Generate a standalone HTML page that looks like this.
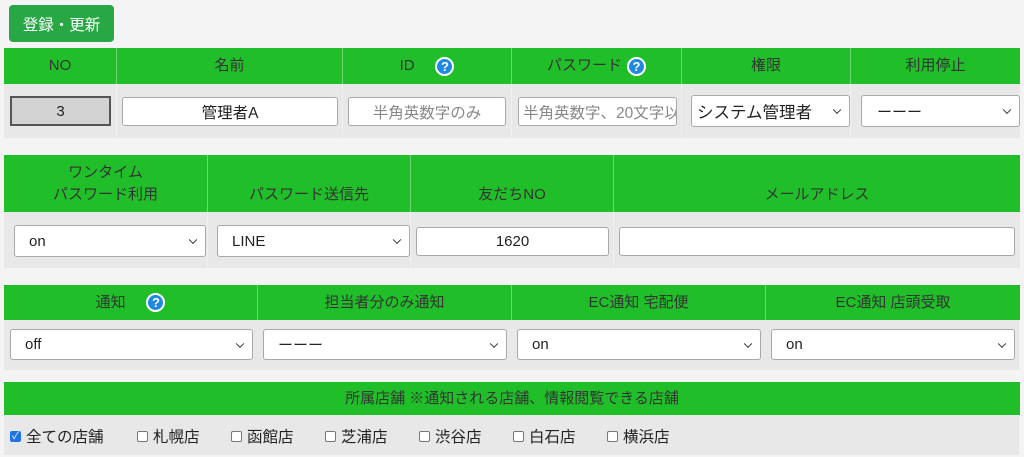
<!DOCTYPE html>
<html><head><meta charset="utf-8"><style>
*{box-sizing:border-box;margin:0;padding:0}
body{width:1024px;height:457px;background:#f4f4f4;position:relative;overflow:hidden;font-family:"Liberation Sans","Noto Sans CJK JP",sans-serif;font-size:15px;color:#222}
.a{position:absolute}
.h{position:absolute;background:#20bf2a;color:#333;display:flex;align-items:center;justify-content:center;text-align:center;line-height:22px;border-right:1px solid #6fd876}
.b{position:absolute;background:#e8e8e8;border-right:1px solid #f0f0f0}
.in{position:absolute;background:#fff;border:1px solid #a9a9a9;border-radius:3px;display:flex;align-items:center;justify-content:center;font-size:15px}
.sel{position:absolute;background:#fff;border:1px solid #a9a9a9;border-radius:3px;display:flex;align-items:center;padding-left:14px;font-size:15px}
.sel:after{content:"";position:absolute;right:9px;top:50%;width:5px;height:5px;border-right:1.6px solid #333;border-bottom:1.6px solid #333;transform:translateY(-70%) rotate(45deg)}
.q{display:inline-block;width:19px;height:19px;border-radius:50%;background:#1e88e5;border:2px solid #fff;color:#fff;font-weight:bold;font-size:13px;line-height:15px;text-align:center;vertical-align:middle}
.it{position:absolute;top:426px;font-size:15.5px;white-space:nowrap;display:flex;align-items:center;height:20px}
.cb{display:inline-block;width:11px;height:11px;border:1px solid #777;border-radius:2px;background:#fff;margin-right:5px;flex:none}
</style></head><body>
<div class="a" style="left:9px;top:5px;width:105px;height:37px;background:#28a745;border-radius:4px;color:#fff;display:flex;align-items:center;justify-content:center;font-size:15.5px">登録・更新</div>

<div class="h" style="left:4px;top:48px;width:113px;height:36px">NO</div>
<div class="h" style="left:117px;top:48px;width:226px;height:36px">名前</div>
<div class="h" style="left:343px;top:48px;width:169px;height:36px">ID&nbsp;&nbsp;&nbsp;&nbsp;&nbsp;<span class="q">?</span></div>
<div class="h" style="left:512px;top:48px;width:170px;height:36px">パスワード <span class="q" style="margin-left:5px">?</span></div>
<div class="h" style="left:682px;top:48px;width:169px;height:36px">権限</div>
<div class="h" style="left:851px;top:48px;width:169px;height:36px;border-right:none">利用停止</div>
<div class="b" style="left:4px;top:84px;width:113px;height:54px"></div>
<div class="b" style="left:117px;top:84px;width:226px;height:54px"></div>
<div class="b" style="left:343px;top:84px;width:169px;height:54px"></div>
<div class="b" style="left:512px;top:84px;width:170px;height:54px"></div>
<div class="b" style="left:682px;top:84px;width:169px;height:54px"></div>
<div class="b" style="left:851px;top:84px;width:169px;height:54px;border-right:none"></div>
<div class="in" style="left:10px;top:96px;width:101px;height:30px;background:#d3d3d3;border:2px solid #555;border-radius:0">3</div>
<div class="in" style="left:122px;top:97px;width:216px;height:29px;font-size:15.5px">管理者A</div>
<div class="in" style="left:348px;top:97px;width:158px;height:29px;color:#888;font-size:15.5px">半角英数字のみ</div>
<div class="in" style="left:518px;top:97px;width:159px;height:29px;color:#888;justify-content:flex-start;padding-left:4px;overflow:hidden;white-space:nowrap;font-size:15.5px">半角英数字、20文字以</div>
<div class="sel" style="left:691px;top:95px;width:159px;height:32px;padding-left:5px;font-size:16.5px">システム管理者</div>
<div class="sel" style="left:861px;top:95px;width:159px;height:32px;padding-left:15px">ーーー</div>

<div class="h" style="left:4px;top:155px;width:204px;height:57px">ワンタイム<br>パスワード利用</div>
<div class="h" style="left:208px;top:155px;width:203px;height:57px;padding-top:22px">パスワード送信先</div>
<div class="h" style="left:411px;top:155px;width:203px;height:57px;padding-top:22px">友だちNO</div>
<div class="h" style="left:614px;top:155px;width:406px;height:57px;padding-top:22px;border-right:none">メールアドレス</div>
<div class="b" style="left:4px;top:212px;width:204px;height:56px"></div>
<div class="b" style="left:208px;top:212px;width:203px;height:56px"></div>
<div class="b" style="left:411px;top:212px;width:203px;height:56px"></div>
<div class="b" style="left:614px;top:212px;width:406px;height:56px;border-right:none"></div>
<div class="sel" style="left:14px;top:225px;width:192px;height:32px">on</div>
<div class="sel" style="left:217px;top:225px;width:193px;height:32px">LINE</div>
<div class="in" style="left:416px;top:227px;width:193px;height:29px">1620</div>
<div class="in" style="left:619px;top:227px;width:396px;height:29px"></div>

<div class="h" style="left:4px;top:285px;width:254px;height:35px">通知&nbsp;&nbsp;&nbsp;&nbsp;&nbsp;<span class="q">?</span></div>
<div class="h" style="left:258px;top:285px;width:254px;height:35px">担当者分のみ通知</div>
<div class="h" style="left:512px;top:285px;width:254px;height:35px">EC通知 宅配便</div>
<div class="h" style="left:766px;top:285px;width:254px;height:35px;border-right:none">EC通知 店頭受取</div>
<div class="b" style="left:4px;top:320px;width:1016px;height:50px"></div>
<div class="sel" style="left:10px;top:329px;width:243px;height:31px">off</div>
<div class="sel" style="left:263px;top:329px;width:244px;height:31px">ーーー</div>
<div class="sel" style="left:517px;top:329px;width:244px;height:31px">on</div>
<div class="sel" style="left:771px;top:329px;width:244px;height:31px">on</div>

<div class="h" style="left:4px;top:382px;width:1016px;height:33px;border-right:none">所属店舗 ※通知される店舗、情報閲覧できる店舗</div>
<div class="b" style="left:4px;top:415px;width:1016px;height:40px"></div>
<div class="it" style="left:10px"><span class="cb" style="background:#1e73e8;border-color:#1e73e8;color:#fff;font-size:10px;line-height:9px;text-align:center">✓</span>全ての店舗</div>
<div class="it" style="left:137px"><span class="cb"></span>札幌店</div>
<div class="it" style="left:231px"><span class="cb"></span>函館店</div>
<div class="it" style="left:325px"><span class="cb"></span>芝浦店</div>
<div class="it" style="left:419px"><span class="cb"></span>渋谷店</div>
<div class="it" style="left:513px"><span class="cb"></span>白石店</div>
<div class="it" style="left:607px"><span class="cb"></span>横浜店</div>
</body></html>
